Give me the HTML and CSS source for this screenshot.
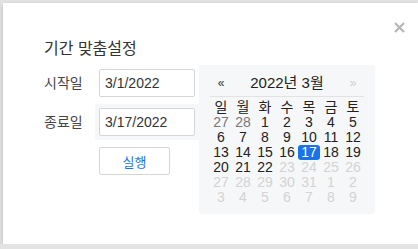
FILE: index.html
```html
<!DOCTYPE html>
<html lang="ko">
<head>
    <meta charset="UTF-8">
    <meta name="viewport" content="width=device-width, initial-scale=1.0">
    <title>기간 맞춤설정</title>
    <link rel="stylesheet" href="styles.css">
</head>
<body>
    <div class="modal">
        <button class="close" type="button" aria-label="닫기">
            <svg width="11" height="11" viewBox="0 0 11 11"><path d="M1 1L10 10M10 1L1 10" stroke="#b3b3b3" stroke-width="2"/></svg>
        </button>
        <div class="title">기간 맞춤설정</div>
        <div class="picker">
            <div class="fields">
                <label class="label" for="start">시작일</label>
                <div class="cell"><input type="text" id="start" value="3/1/2022"></div>
                <label class="label" for="end">종료일</label>
                <div class="cell active"><input type="text" id="end" value="3/17/2022"></div>
                <div></div>
                <div class="cell"><button type="button" class="btn">실행</button></div>
            </div>
            <div class="calendar">
                <div class="cal-head">
                    <span class="nav">&laquo;</span>
                    <span class="month">2022년 3월</span>
                    <span class="nav off">&raquo;</span>
                </div>
                <div class="days">
                    <span>일</span><span>월</span><span>화</span><span>수</span><span>목</span><span>금</span><span>토</span>
                    <span class="old">27</span><span class="old">28</span><span>1</span><span>2</span><span>3</span><span>4</span><span>5</span>
                    <span>6</span><span>7</span><span>8</span><span>9</span><span>10</span><span>11</span><span>12</span>
                    <span>13</span><span>14</span><span>15</span><span>16</span><span class="sel">17</span><span>18</span><span>19</span>
                    <span>20</span><span>21</span><span>22</span><span class="off">23</span><span class="off">24</span><span class="off">25</span><span class="off">26</span>
                    <span class="off">27</span><span class="off">28</span><span class="off">29</span><span class="off">30</span><span class="off">31</span><span class="off">1</span><span class="off">2</span>
                    <span class="off">3</span><span class="off">4</span><span class="off">5</span><span class="off">6</span><span class="off">7</span><span class="off">8</span><span class="off">9</span>
                </div>
            </div>
        </div>
    </div>
</body>
</html>
```

FILE: styles.css
```css
body {
    margin: 0;
    background: #e3e3e3;
    font-family: "Liberation Sans", "Noto Sans CJK KR", sans-serif;
    color: #333;
    overflow: hidden;
}
.modal {
    position: relative;
    margin: 3px 0 0 3px;
    width: calc(100vw - 3px);
    height: 241px;
    box-sizing: border-box;
    padding: 36px 0 0 41px;
    background: #ffffff;
    box-shadow: 0 2px 5px rgba(0, 0, 0, 0.18);
}
.close {
    position: absolute;
    left: 391px;
    top: 19px;
    padding: 0;
    border: none;
    background: none;
    line-height: 0;
}
.title {
    font-size: 16px;
    line-height: 20px;
    height: 20px;
    margin-bottom: 6px;
}
.picker {
    display: flex;
    align-items: flex-start;
}
.fields {
    display: grid;
    grid-template-columns: 51px 104px;
    grid-auto-rows: 36px;
    row-gap: 3px;
}
.label {
    font-size: 14px;
    line-height: 36px;
    color: #444;
}
.cell {
    padding: 4px;
    border-radius: 2px 0 0 2px;
}
.cell.active {
    background: #f6f7f9;
}
.cell input {
    display: block;
    width: 96px;
    height: 28px;
    box-sizing: border-box;
    margin: 0;
    padding: 0 5px;
    font-family: inherit;
    font-size: 14px;
    color: #333;
    border: 1px solid #d6d6d6;
    border-radius: 2px;
    outline: none;
}
.btn {
    display: block;
    width: 71px;
    height: 28px;
    padding: 0;
    font-family: inherit;
    font-size: 13px;
    color: #1a73e8;
    background: #ffffff;
    border: 1px solid #d6d6d6;
    border-radius: 2px;
}
.calendar {
    width: 176px;
    height: 149px;
    box-sizing: border-box;
    padding: 0 11px;
    background: #f6f7f9;
    border-radius: 3px;
}
.cal-head {
    display: grid;
    grid-template-columns: 22px 1fr 22px;
    align-items: center;
    padding: 10px 0 5px;
    line-height: 16px;
    border-bottom: 1px solid #e2e2e2;
}
.nav {
    text-align: center;
    font-size: 12px;
    color: #333;
}
.nav.off {
    color: #cccccc;
}
.month {
    text-align: center;
    font-size: 15px;
    color: #222;
}
.days {
    display: grid;
    grid-template-columns: repeat(7, 22px);
    grid-auto-rows: 15px;
    margin-top: 3px;
    font-size: 14px;
    line-height: 15px;
    color: #222;
    text-align: center;
}
.days .old {
    color: #777;
}
.days .off {
    color: #d3d3d3;
}
.days .sel {
    color: #ffffff;
    background: #1a73e8;
    border-radius: 3px;
}
```
